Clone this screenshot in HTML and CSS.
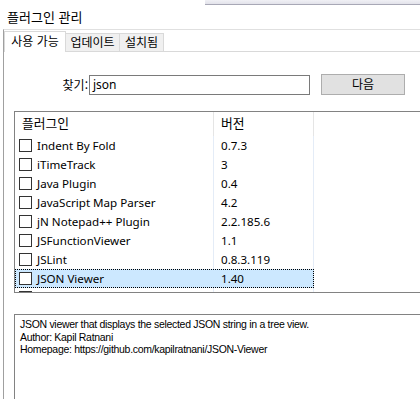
FILE: index.html
```html
<!DOCTYPE html>
<html lang="ko">
<head>
<meta charset="utf-8">
<title>플러그인 관리</title>
<link rel="stylesheet" href="styles.css">
</head>
<body>
<div class="titlebar">
  <div class="title">플러그인 관리</div>
  <div class="strip"></div>
</div>
<div class="frame">
  <div class="tabs">
    <div class="tab active">사용 가능</div>
    <div class="tab t2">업데이트</div>
    <div class="tab t3">설치됨</div>
  </div>
  <div class="pane">
    <div class="findrow">
      <label class="findlabel">찾기:</label>
      <div class="input">json</div>
      <div class="button">다음</div>
    </div>
    <div class="list">
      <div class="header">
        <div class="hcol c1">플러그인</div>
        <div class="hcol c2">버전</div>
        <div class="hcol c3"></div>
      </div>
      <div class="rows">
        <div class="row"><div class="cell c1"><span class="cb"></span>Indent By Fold</div><div class="cell c2">0.7.3</div></div>
        <div class="row"><div class="cell c1"><span class="cb"></span>iTimeTrack</div><div class="cell c2">3</div></div>
        <div class="row"><div class="cell c1"><span class="cb"></span>Java Plugin</div><div class="cell c2">0.4</div></div>
        <div class="row"><div class="cell c1"><span class="cb"></span>JavaScript Map Parser</div><div class="cell c2">4.2</div></div>
        <div class="row"><div class="cell c1"><span class="cb"></span>jN Notepad++ Plugin</div><div class="cell c2">2.2.185.6</div></div>
        <div class="row"><div class="cell c1"><span class="cb"></span>JSFunctionViewer</div><div class="cell c2">1.1</div></div>
        <div class="row"><div class="cell c1"><span class="cb"></span>JSLint</div><div class="cell c2">0.8.3.119</div></div>
        <div class="row selected"><div class="cell c1"><span class="cb"></span>JSON Viewer</div><div class="cell c2">1.40</div></div>
        <div class="row"><div class="cell c1"><span class="cb"></span></div><div class="cell c2"></div></div>
      </div>
    </div>
    <div class="desc">
      <div>JSON viewer that displays the selected JSON string in a tree view.</div>
      <div>Author: Kapil Ratnani</div>
      <div>Homepage: https://github.com/kapilratnani/JSON-Viewer</div>
    </div>
  </div>
</div>
</body>
</html>
```
FILE: styles.css
```css
html, body {
  margin: 0;
  padding: 0;
  background: #ffffff;
  width: 420px;
  height: 399px;
  overflow: hidden;
}
body {
  font-family: "Noto Sans", "Noto Sans CJK KR", sans-serif;
  font-size: 11.6px;
  color: #000;
}
.titlebar {
  height: 29px;
  display: flex;
  align-items: flex-start;
}
.title {
  font-family: "Noto Sans CJK KR", sans-serif;
  font-size: 13px;
  line-height: 17px;
  padding: 8px 0 0 7px;
}
.strip {
  margin-left: auto;
  width: 215px;
  height: 4px;
  background: linear-gradient(#f0f0f5, #e2e2ea);
  border-bottom: 1px solid #a8a8b6;
}
.frame {
  margin-left: 3px;
  border-left: 1px solid #a0a0a0;
  border-top: 1px solid #e0e0e0;
  height: 370px;
}
.tabs {
  display: flex;
  align-items: flex-end;
  height: 20px;
  margin-top: 1px;
  position: relative;
  z-index: 1;
}
.tab {
  font-family: "Noto Sans CJK KR", sans-serif;
  font-size: 12px;
  box-sizing: border-box;
  border: 1px solid #d9d9d9;
  border-bottom: none;
  background: #f0f0f0;
  height: 18px;
  line-height: 16px;
  text-align: center;
}
.tab.active {
  background: #fff;
  height: 21px;
  width: 62px;
  line-height: 17px;
  margin-bottom: -1px;
}
.tab.t2 { width: 54px; border-left: none; }
.tab.t3 { width: 44px; border-left: none; }
.pane {
  border-top: 1px solid #d9d9d9;
}
.findrow {
  display: flex;
  align-items: center;
  margin-top: 22px;
  height: 21px;
}
.findlabel {
  font-family: "Noto Sans CJK KR", sans-serif;
  font-size: 12px;
  width: 84px;
  text-align: right;
  padding-right: 1px;
  line-height: 16px;
}
.input {
  box-sizing: border-box;
  width: 221px;
  height: 20px;
  border: 1px solid #7a7a7a;
  padding-left: 3px;
  line-height: 17px;
  font-size: 12px;
}
.button {
  box-sizing: border-box;
  margin-left: 11px;
  width: 84px;
  height: 21px;
  background: #e1e1e1;
  border: 1px solid #adadad;
  font-family: "Noto Sans CJK KR", sans-serif;
  font-size: 12px;
  text-align: center;
  line-height: 18px;
}
.list {
  box-sizing: border-box;
  margin: 16px 0 0 10px;
  width: 420px;
  height: 182px;
  border: 1px solid #828282;
  overflow: hidden;
}
.header {
  display: flex;
  height: 24px;
}
.hcol {
  box-sizing: border-box;
  font-family: "Noto Sans CJK KR", sans-serif;
  font-size: 12.8px;
  padding-left: 7px;
  line-height: 22px;
  border-right: 1px solid #e5e5e5;
}
.c1 { width: 199px; }
.c2 { width: 100px; }
.hcol.c3 { border-right: none; flex: 1; }
.rows {
  background-image:
    linear-gradient(#e4ecf7, #e4ecf7),
    linear-gradient(#e4ecf7, #e4ecf7);
  background-size: 1px 100%, 1px 100%;
  background-position: 198px 0, 298px 0;
  background-repeat: no-repeat;
}
.row {
  display: flex;
  height: 19px;
  box-sizing: border-box;
}
.row.selected {
  width: 299px;
  background: #cce8ff;
  outline: 1px dotted #000;
  outline-offset: -1px;
}
.cell {
  box-sizing: border-box;
  display: flex;
  align-items: center;
  line-height: 19px;
  white-space: nowrap;
}
.cell.c1 { padding-left: 4px; }
.cell.c2 { padding-left: 7px; }
.cb {
  box-sizing: border-box;
  width: 13px;
  height: 13px;
  border: 1px solid #333;
  background: #fff;
  margin-right: 5px;
  flex: none;
}
.desc {
  box-sizing: border-box;
  margin: 21px 0 0 10px;
  width: 420px;
  height: 90px;
  border: 1px solid #828282;
  padding: 3px 0 0 5px;
  font-family: "Liberation Sans", Arial, sans-serif;
  font-size: 10.5px;
  letter-spacing: -0.3px;
  line-height: 12.5px;
}
```
